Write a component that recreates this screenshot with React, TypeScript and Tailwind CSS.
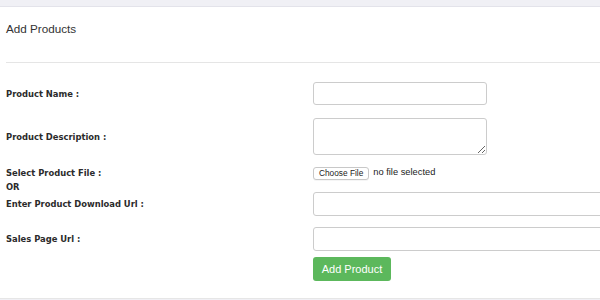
export default function App() {
  const label = "text-[8.4px] font-bold text-[#2b2b2b] leading-[12px]";
  return (
    <div className="w-[600px] h-[300px] overflow-hidden bg-[#f0f0f5] font-['Liberation_Sans',Arial,sans-serif]">
      <div className="h-[7px] border-b border-[#e3e3ea]" />
      <div className="bg-white h-[292px] border-b border-[#e6e6e6] pl-[6px]">
        {/* Header */}
        <div className="h-[56px] border-b border-[#e5e5e5] pt-[14px]">
          <h1 className="text-[11.7px] text-[#333] leading-[16px]">Add Products</h1>
        </div>

        {/* Form */}
        <form className="font-['DejaVu_Sans',Verdana,sans-serif]">
          <div className="flex items-center mt-[19px] h-[23px]">
            <label className={`${label} w-[307px]`}>Product Name :</label>
            <input className="w-[174px] h-[23px] border border-[#ccc] rounded-[3px]" />
          </div>

          <div className="flex items-center mt-[13px] h-[37px]">
            <label className={`${label} w-[307px]`}>Product Description :</label>
            <textarea className="w-[174px] h-[37px] border border-[#ccc] rounded-[3px] resize-y" />
          </div>

          <div className="flex mt-[11px] h-[26px]">
            <div className={`${label} w-[307px] leading-[14px]`}>
              <div>Select Product File :</div>
              <div>OR</div>
            </div>
            <div className="flex items-center h-[14px] font-['Liberation_Sans',Arial,sans-serif] text-[9.3px] text-[#222]">
              <span className="h-[13px] px-[5px] flex items-center border border-[#c8c8c8] rounded-[3px] bg-white shadow-[0_1px_0_rgba(0,0,0,0.04)] text-[8.3px]">
                Choose File
              </span>
              <span className="ml-[4px]">no file selected</span>
            </div>
          </div>

          <div className="flex items-center h-[24px]">
            <label className={`${label} w-[307px] shrink-0`}>Enter Product Download Url :</label>
            <input className="w-[320px] shrink-0 h-[24px] border border-[#ccc] rounded-[3px]" />
          </div>

          <div className="flex items-center mt-[11px] h-[24px]">
            <label className={`${label} w-[307px] shrink-0`}>Sales Page Url :</label>
            <input className="w-[320px] shrink-0 h-[24px] border border-[#ccc] rounded-[3px]" />
          </div>

          <div className="flex mt-[6px]">
            <div className="w-[307px]" />
            <button
              type="button"
              className="w-[78px] h-[24px] bg-[#5cb85c] rounded-[3px] text-white text-[11px] font-['Liberation_Sans',Arial,sans-serif] leading-none"
            >
              Add Product
            </button>
          </div>
        </form>
      </div>
    </div>
  );
}
